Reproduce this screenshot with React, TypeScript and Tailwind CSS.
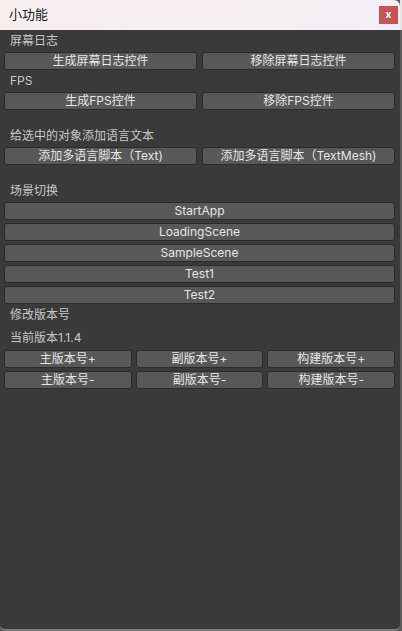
import React from "react";

const font = { fontFamily: 'Inter, "Noto Sans CJK SC", sans-serif' };

function Btn({ children, className = "" }: { children: React.ReactNode; className?: string }) {
  return (
    <div
      className={
        "h-[18px] flex items-center justify-center rounded-[3px] border border-[#2c2c2c] bg-[#585858] text-[12px] leading-none text-[#e6e6e6] " +
        className
      }
    >
      {children}
    </div>
  );
}

function Label({ children, className = "" }: { children: React.ReactNode; className?: string }) {
  return (
    <div className={"h-[18px] pl-[6px] flex items-center text-[12px] leading-none text-[#c8c8c8] " + className}>
      {children}
    </div>
  );
}

export default function App() {
  return (
    <div className="w-[402px] h-[631px] flex bg-[#5c5c5c]" style={font}>
      <div className="w-[400px] h-[631px] flex flex-col bg-[#3a3a3a] rounded-b-[6px] rounded-tr-[6px] overflow-hidden border-b-2 border-[#7a7a7a]">
        <div className="h-[30px] shrink-0 flex items-center justify-between bg-gradient-to-r from-[#f9eeee] to-[#f4eff6] pl-[9px] pr-[2px]">
          <span className="text-[13px] text-[#1a1a1a]">小功能</span>
          <div className="w-[19px] h-[18px] bg-[#c75352] flex items-center justify-center text-white text-[10px] font-bold leading-none pb-[2px]">
            x
          </div>
        </div>
        <div className="flex flex-col pl-[4px] pr-[5px] pt-[2px]">
          <Label>屏幕日志</Label>
          <div className="mt-[2px] flex gap-[5px]">
            <Btn className="flex-1">生成屏幕日志控件</Btn>
            <Btn className="flex-1">移除屏幕日志控件</Btn>
          </div>
          <Label className="mt-[2px]">FPS</Label>
          <div className="mt-[2px] flex gap-[5px]">
            <Btn className="flex-1">生成FPS控件</Btn>
            <Btn className="flex-1">移除FPS控件</Btn>
          </div>
          <Label className="mt-[17px]">给选中的对象添加语言文本</Label>
          <div className="mt-[2px] flex gap-[5px]">
            <Btn className="flex-1">添加多语言脚本（Text)</Btn>
            <Btn className="flex-1">添加多语言脚本（TextMesh)</Btn>
          </div>
          <Label className="mt-[17px]">场景切换</Label>
          <div className="mt-[2px] flex flex-col gap-[3px]">
            <Btn>StartApp</Btn>
            <Btn>LoadingScene</Btn>
            <Btn>SampleScene</Btn>
            <Btn>Test1</Btn>
            <Btn>Test2</Btn>
          </div>
          <Label className="mt-[2px]">修改版本号</Label>
          <Label className="mt-[5px]">当前版本1.1.4</Label>
          <div className="mt-[3px] grid grid-cols-3 gap-x-[4px] gap-y-[3px]">
            <Btn>主版本号+</Btn>
            <Btn>副版本号+</Btn>
            <Btn>构建版本号+</Btn>
            <Btn>主版本号-</Btn>
            <Btn>副版本号-</Btn>
            <Btn>构建版本号-</Btn>
          </div>
        </div>
      </div>
      <div className="w-[2px] h-[631px] flex flex-col">
        <div className="h-[30px] bg-[#e6e6e6]" />
        <div className="flex-1 bg-[#5c5c5c]" />
      </div>
    </div>
  );
}
